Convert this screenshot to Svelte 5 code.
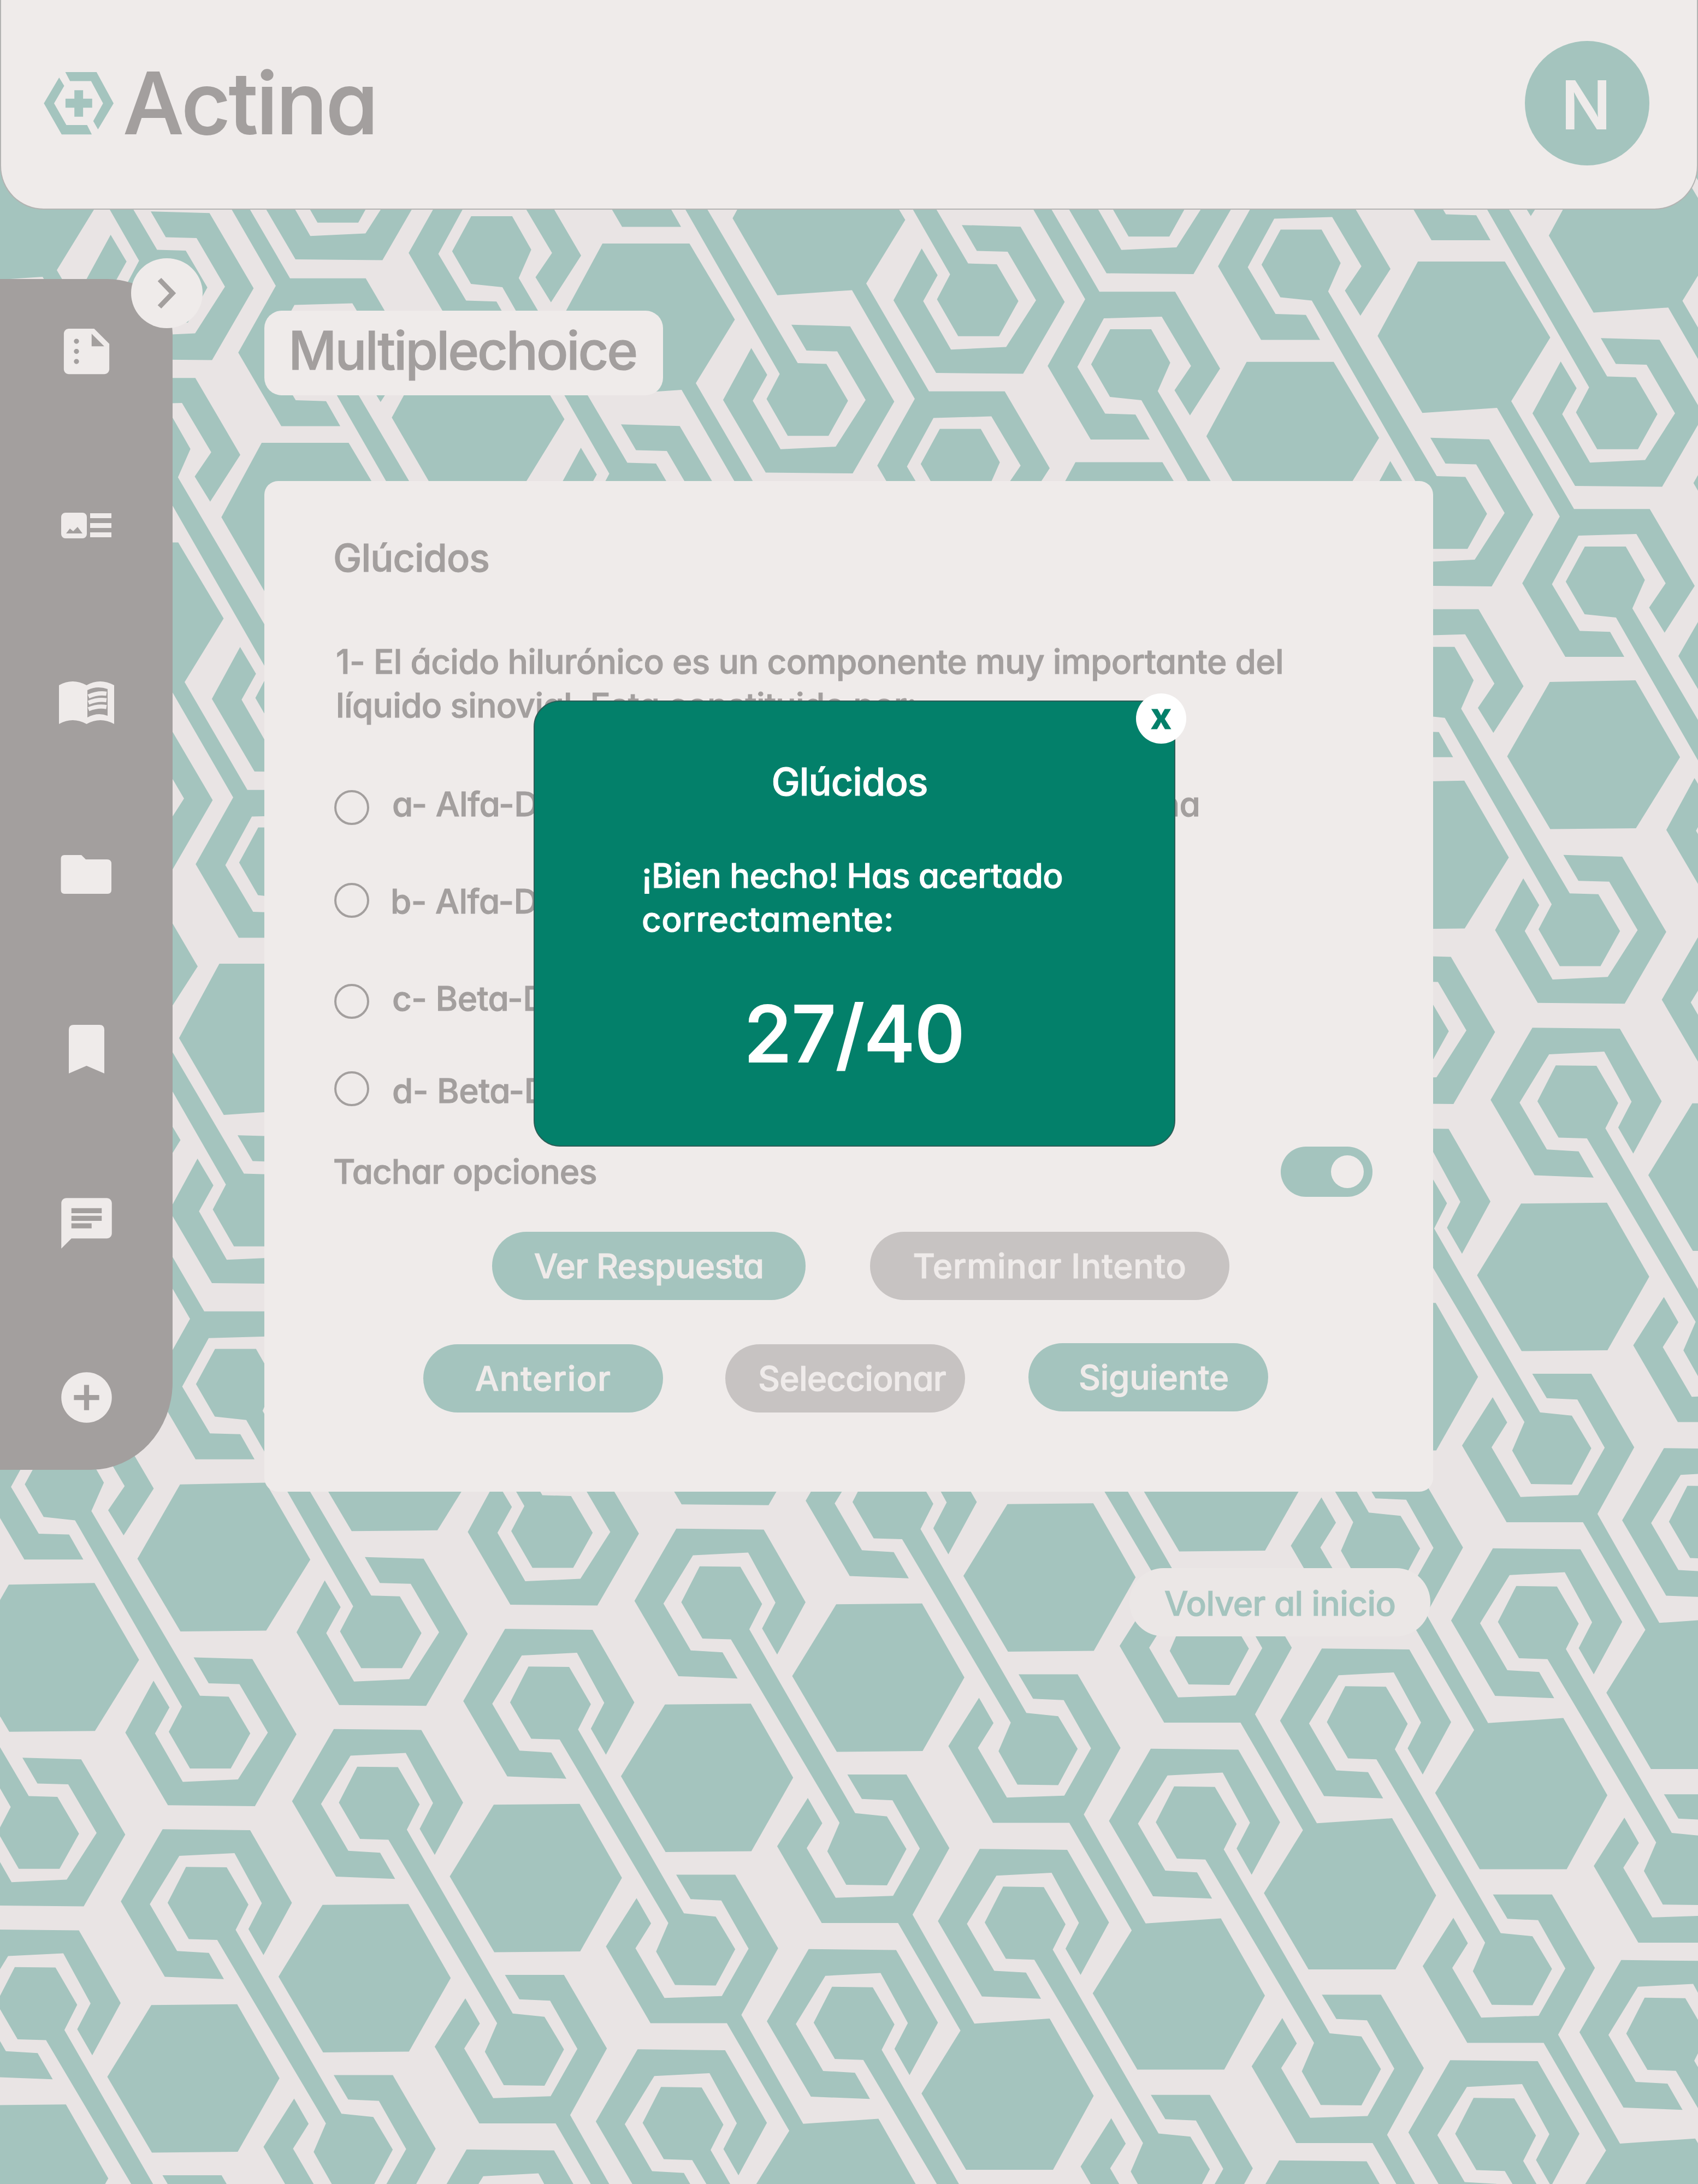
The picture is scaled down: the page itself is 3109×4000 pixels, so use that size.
<script>
  const question = {
    topic: 'Glúcidos',
    text: '1- El ácido hilurónico es un componente muy importante del líquido sinovial. Esta constituido por:',
    options: [
      'a- Alfa-D-glucurónico y Beta-N-acetilglucosamina',
      'b- Alfa-D-glucurónico',
      'c- Beta-D-glucurónico',
      'd- Beta-D-galactosa',
    ],
  };

  // Background pattern: hexagons laid out in diagonal rows. Each family of
  // shapes is drawn once and repeated along the row vector.
  const families = {
    upper: {
      origin: [1553, 466],
      scale: [0.3884, 1.5306],
      shapes: [
        '248,78 658,78 872,169 688,245 984,374 1341,374 1553,466 1411,522 1338,492 1416,463 1278,404 1005,406 880,464 1011,520 1154,521 1221,551 943,551 740,463 917,383 621,253 269,259 58,167',
        '1035,419 1228,419 1318,459 1259,493 1771,714 1906,715 2008,759 1916,801 1724,801 1624,757 1686,727 1182,504 1034,500 945,461',
        '1741,668 2018,670 2226,760 2030,846 1620,845 1419,758 1552,696 1627,728 1559,759 1690,817 1950,814 2091,758 1957,700 1812,699',
      ],
    },
    plain: {
      origin: [742, 588],
      scale: [0.3884, 1.5306],
      shapes: ['866,583 1270,581 1480,673 1272,758 868,759 665,672'],
    },
    lower: {
      origin: [832, 737],
      scale: [1.0204, 0.8418],
      shapes: [
        '600,577 757,579 832,737 781,851 754,794 778,738 729,629 630,635 577,740 626,842 683,846 710,903 604,898 525,734',
        '642,659 715,660 754,741 731,796 921,1196 978,1203 1013,1274 978,1353 905,1352 871,1279 893,1217 698,818 647,816 609,737',
        '907,1112 1013,1112 1090,1272 1024,1417 1135,1654 1270,1643 1349,1811 1276,1972 1120,1972 1040,1806 1110,1669 998,1435 861,1435 781,1268 836,1163 862,1218 834,1272 886,1380 989,1376 1037,1273 988,1168 933,1165',
      ],
    },
    lowerPlain: {
      origin: [832, 737],
      scale: [1.0204, 0.8418],
      shapes: ['886,741 1040,739 1116,900 1041,1060 887,1062 807,897'],
    },
  };

  const rows = [
    { family: 'upper', at: [203, 78], step: [312, -183] },
    { family: 'upper', at: [1064, 468], step: [312, -182.5] },
    { family: 'upper', at: [2234, 675], step: [312, -182.5] },
    { family: 'upper', at: [3103, 1073], step: [313.5, -183.7] },
    { family: 'plain', at: [3103, 1073], step: [313.5, -183.7] },
    { family: 'lower', at: [848, 3301.4], step: [313.5, -183.5] },
    { family: 'lowerPlain', at: [849, 3302], step: [313.5, -183.5] },
    { family: 'lower', at: [2657, 3154], step: [313.2, -183.5] },
    { family: 'lower', at: [2892, 3908], step: [313.2, -183.5] },
  ];

  const tiles = rows.flatMap(({ family, at, step }) => {
    const { origin, scale, shapes } = families[family];
    const found = [];
    for (let n = -14; n <= 14; n++) {
      const x = at[0] + n * step[0];
      const y = at[1] + n * step[1];
      if (x < -700 || x > 3700 || y < -1300 || y > 4600) continue;
      const move = `translate(${(x - origin[0] * scale[0]).toFixed(1)} ${(y - origin[1] * scale[1]).toFixed(1)}) scale(${scale[0]} ${scale[1]})`;
      found.push({ move, shapes });
    }
    return found;
  });
</script>

<div class="page">
  <svg class="pattern" viewBox="0 0 3109 4000" aria-hidden="true">
    {#each tiles as tile}
      <g transform={tile.move}>
        {#each tile.shapes as points}<polygon {points} />{/each}
      </g>
    {/each}
  </svg>

  <header>
    <div class="brand">
      <svg class="logo" viewBox="0 0 386 346" aria-hidden="true">
        <path d="M118 0H290L384 172L298 316L272 270L326 172L260 50H144ZM84 30L112 76L56 172L124 292H238L264 344H98L0 172ZM168 100H216V147H266V196H216V246H168V196H119V147H168Z" />
      </svg>
      <span>Actina</span>
    </div>
    <div class="avatar">N</div>
  </header>

  <div class="body">
    <nav>
      <button class="expand" aria-label="Expandir">
        <svg viewBox="0 0 40 60"><path d="M6 5L30 30L6 55" /></svg>
      </button>
      <svg viewBox="0 0 24 24"><path d="M15 3H5c-1.1 0-1.99.9-1.99 2L3 19c0 1.1.89 2 1.99 2H19c1.1 0 2-.9 2-2V9l-6-6zM8 17c-.55 0-1-.45-1-1s.45-1 1-1 1 .45 1 1-.45 1-1 1zm0-4c-.55 0-1-.45-1-1s.45-1 1-1 1 .45 1 1-.45 1-1 1zm0-4c-.55 0-1-.45-1-1s.45-1 1-1 1 .45 1 1-.45 1-1 1zm6 1V5l5 5h-5z" /></svg>
      <svg viewBox="0 0 111 111">
        <path fill-rule="evenodd" d="M17 32H48a8 8 0 0 1 8 8V71a8 8 0 0 1-8 8H17a8 8 0 0 1-8-8V40a8 8 0 0 1 8-8ZM18 70H48L39 58L31 66L25 61Z" />
        <path d="M62 33H101V42H62ZM62 51H101V60H62ZM62 68H101V77H62Z" />
      </svg>
      <svg viewBox="0 0 111 111">
        <path d="M5 28Q30 14 55.500 28Q80 14 106 28V99Q81 85 55.500 99Q30 85 5 99Z" />
        <path class="cut" d="M57 37Q75 28 94 35V84Q76 77 57 87Z" />
        <path class="line" d="M59 48.500Q76 41 92 43.500M59 60Q76 53 92 55.500M59 72Q76 65 92 68" />
      </svg>
      <svg viewBox="0 0 111 111"><path d="M15 20H46L54 28H93Q101 28 101 36V84Q101 91 94 91H15Q8.500 91 8.500 84V27Q8.500 20 15 20Z" /></svg>
      <svg viewBox="0 0 111 111"><path d="M32 11H79Q88 11 88 20V100L55.500 86L23 100V20Q23 11 32 11Z" /></svg>
      <svg viewBox="0 0 24 24"><path d="M20 2H4c-1.100 0-1.990.9-1.990 2L2 22l4-4h14c1.100 0 2-.9 2-2V4c0-1.100-.9-2-2-2zM6 9h12v2H6V9zm8 5H6v-2h8v2zm4-6H6V6h12v2z" /></svg>
      <svg viewBox="0 0 24 24"><path d="M12 2C6.480 2 2 6.480 2 12s4.480 10 10 10 10-4.480 10-10S17.520 2 12 2zm5 11h-4v4h-2v-4H7v-2h4V7h2v4h4v2z" /></svg>
    </nav>

    <main>
      <h1>Multiplechoice</h1>

      <section class="card">
        <h2>{question.topic}</h2>
        <p class="question">{question.text}</p>
        <ul>
          {#each question.options as option}
            <li><span class="radio"></span><span>{option}</span></li>
          {/each}
        </ul>
        <div class="strike">
          <span>Tachar opciones</span>
          <span class="toggle"><span class="knob"></span></span>
        </div>
        <div class="actions">
          <button class="wide">Ver Respuesta</button>
          <button class="finish">Terminar Intento</button>
        </div>
        <div class="actions steps">
          <button class="prev">Anterior</button>
          <button class="select">Seleccionar</button>
          <button class="next">Siguiente</button>
        </div>
      </section>

      <button class="home">Volver al inicio</button>
    </main>
  </div>

  <div class="modal" role="dialog">
    <button class="close" aria-label="Cerrar">x</button>
    <h2>Glúcidos</h2>
    <p>¡Bien hecho! Has acertado <span>correctamente:</span></p>
    <strong>27/40</strong>
  </div>
</div>

<style>
  :global(body) { margin: 0; }

  .page {
    --teal: #a4c4be;
    --paper: #efebea;
    --ink: #a39f9e;
    --muted: #c7c3c2;
    position: relative;
    width: 3109px;
    height: 4000px;
    overflow: hidden;
    background: #e9e4e4;
    color: var(--ink);
    font-family: Inter, "Open Sans", sans-serif;
    font-feature-settings: "cv11" 1;
    font-weight: 500;
    font-size: 62px;
    line-height: 80px;
    -webkit-text-stroke: 1px currentColor;
  }
  h1, h2, p, ul, strong { margin: 0; padding: 0; font: inherit; font-feature-settings: inherit; }
  button {
    box-sizing: border-box;
    padding: 0;
    border: 0;
    font: inherit;
    font-feature-settings: inherit;
    color: var(--paper);
    white-space: nowrap;
    -webkit-text-stroke: 1px currentColor;
  }

  .pattern {
    position: absolute;
    inset: 0;
    width: 3109px;
    height: 4000px;
    fill: var(--teal);
  }

  header {
    position: relative;
    box-sizing: border-box;
    height: 384px;
    padding: 0 87px 4px 78px;
    display: flex;
    align-items: center;
    justify-content: space-between;
    background: var(--paper);
    border: 2px solid #b3b3b2;
    border-top: 0;
    border-radius: 0 0 80px 80px;
  }
  .brand {
    display: flex;
    align-items: center;
    font-size: 155px;
    line-height: 180px;
    letter-spacing: -2.500px;
    -webkit-text-stroke: 2px currentColor;
  }
  .logo { width: 129px; height: 115px; margin-right: 17px; fill: var(--teal); }
  .avatar {
    width: 228px;
    height: 228px;
    border-radius: 50%;
    background: var(--teal);
    color: var(--paper);
    font-size: 121px;
    line-height: 234px;
    text-align: center;
    text-indent: -4px;
    -webkit-text-stroke: 2px var(--paper);
  }

  .body { position: relative; display: flex; align-items: flex-start; }

  nav {
    position: relative;
    box-sizing: border-box;
    width: 316px;
    height: 2181px;
    margin-top: 127px;
    padding-top: 77px;
    display: flex;
    flex-direction: column;
    align-items: center;
    gap: 208.400px;
    background: var(--ink);
    border-radius: 0 120px 150px 0 / 0 100px 160px 0;
  }
  nav > svg { width: 111px; height: 111px; flex: none; fill: var(--paper); }
  nav .cut { fill: var(--ink); }
  nav .line { fill: none; stroke: var(--paper); stroke-width: 7.500; }
  .expand {
    position: absolute;
    left: 240px;
    top: -38px;
    width: 131px;
    height: 128px;
    border-radius: 50%;
    display: grid;
    place-items: center;
    background: var(--paper);
  }
  .expand svg { width: 40px; height: 60px; fill: none; stroke: var(--ink); stroke-width: 9; }

  main { width: 2140px; margin-left: 168px; }
  h1 {
    box-sizing: border-box;
    width: 730px;
    height: 155px;
    margin-top: 185px;
    padding-left: 44px;
    background: var(--paper);
    border-radius: 32px;
    font-size: 97px;
    line-height: 146px;
    letter-spacing: -3.200px;
  }

  .card {
    box-sizing: border-box;
    height: 1851px;
    margin-top: 157px;
    padding: 101px 111px 0 126px;
    background: var(--paper);
    border-radius: 25px;
  }
  h2 { font-size: 70px; letter-spacing: -0.900px; }
  .question { margin-top: 110px; width: 1900px; padding-left: 5px; letter-spacing: -0.660px; }
  ul { list-style: none; }
  li { display: flex; align-items: center; height: 80px; letter-spacing: -0.500px; white-space: nowrap; }
  li:nth-child(1) { margin-top: 101px; }
  li:nth-child(2) { margin-top: 98px; }
  li:nth-child(3) { margin-top: 98px; }
  li:nth-child(4) { margin-top: 89px; }
  .radio {
    box-sizing: border-box;
    width: 64px;
    height: 64px;
    margin: 0 42px 0 2px;
    border: 4px solid var(--ink);
    border-radius: 50%;
  }
  li:nth-child(1) .radio { margin-top: 12px; }
  li:nth-child(2) .radio { margin-top: -4px; margin-right: 39px; }
  li:nth-child(3) .radio { margin-top: 9px; }
  li:nth-child(4) .radio { margin-top: -9px; }

  .strike {
    display: flex;
    justify-content: space-between;
    align-items: center;
    height: 92px;
    margin-top: 62px;
    letter-spacing: -1px;
  }
  .toggle {
    box-sizing: border-box;
    width: 168px;
    height: 92px;
    padding: 16px;
    display: flex;
    justify-content: flex-end;
    background: var(--teal);
    border-radius: 46px;
  }
  .knob { width: 60px; height: 60px; border-radius: 50%; background: var(--paper); }

  .actions { display: flex; margin: 64px 0 0 291px; gap: 118px; }
  .actions button {
    height: 125px;
    border-radius: 63px;
    background: var(--teal);
    line-height: 126px;
    letter-spacing: -0.800px;
  }
  .wide { width: 574px; }
  .actions .finish { width: 658px; background: var(--muted); letter-spacing: 0.700px; }
  .actions.steps { margin: 81px 0 0 165px; gap: 114px; }
  .steps button { width: 439px; }
  .steps .prev { letter-spacing: 1.200px; }
  .steps .select { background: var(--muted); padding-left: 25px; }
  .steps .next { margin: -2px 0 0 2px; padding-left: 20px; letter-spacing: -0.300px; }

  .home {
    display: block;
    width: 551px;
    height: 125px;
    margin: 140px 0 0 1584px;
    background: #ebe7e6;
    border-radius: 63px;
    color: var(--teal);
    line-height: 130px;
    letter-spacing: -0.600px;
  }

  .modal {
    position: absolute;
    left: 977px;
    top: 1283px;
    box-sizing: border-box;
    width: 1175px;
    height: 817px;
    padding: 107px 190px 0 196px;
    background: #03806a;
    border: 2px solid #2b5c56;
    border-radius: 48px;
    color: #fff;
  }
  .modal h2 { text-align: center; text-indent: -24px; }
  .modal p { margin-top: 92px; width: 860px; letter-spacing: -0.750px; }
  .modal p span { display: block; letter-spacing: 0.400px; }
  .modal strong {
    display: block;
    margin-top: 79px;
    font-size: 143px;
    line-height: 180px;
    text-align: center;
    text-indent: -7px;
    letter-spacing: -1px;
    -webkit-text-stroke: 2px currentColor;
  }
  .close {
    position: absolute;
    right: -22px;
    top: -15px;
    width: 92px;
    height: 92px;
    padding-bottom: 10px;
    border-radius: 50%;
    background: #fff;
    color: #03806a;
    font-size: 66px;
    font-weight: 700;
    line-height: 78px;
  }
</style>
